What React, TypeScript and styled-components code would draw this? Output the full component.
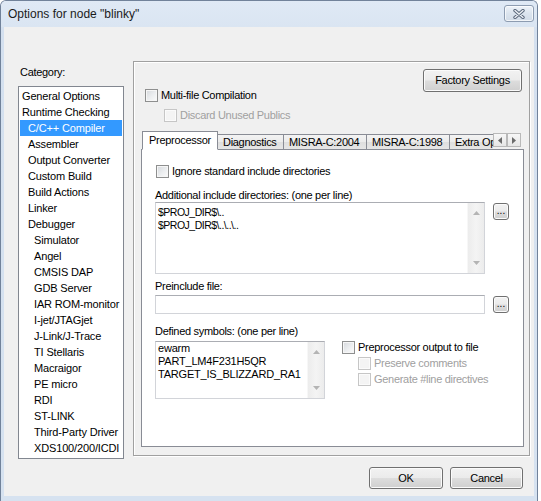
import React from 'react';
import styled, { createGlobalStyle } from 'styled-components';

const GlobalStyle = createGlobalStyle`
  html, body { margin: 0; padding: 0; background: #ffffff; }
  body {
    font-family: "Liberation Sans", Arial, sans-serif;
    font-size: 11px;
    color: #000;
  }
  * { box-sizing: border-box; }
`;

type Category = { label: string; level: number; selected?: boolean };

const categories: Category[] = [
  { label: 'General Options', level: 0 },
  { label: 'Runtime Checking', level: 0 },
  { label: 'C/C++ Compiler', level: 1, selected: true },
  { label: 'Assembler', level: 1 },
  { label: 'Output Converter', level: 1 },
  { label: 'Custom Build', level: 1 },
  { label: 'Build Actions', level: 1 },
  { label: 'Linker', level: 1 },
  { label: 'Debugger', level: 1 },
  { label: 'Simulator', level: 2 },
  { label: 'Angel', level: 2 },
  { label: 'CMSIS DAP', level: 2 },
  { label: 'GDB Server', level: 2 },
  { label: 'IAR ROM-monitor', level: 2 },
  { label: 'I-jet/JTAGjet', level: 2 },
  { label: 'J-Link/J-Trace', level: 2 },
  { label: 'TI Stellaris', level: 2 },
  { label: 'Macraigor', level: 2 },
  { label: 'PE micro', level: 2 },
  { label: 'RDI', level: 2 },
  { label: 'ST-LINK', level: 2 },
  { label: 'Third-Party Driver', level: 2 },
  { label: 'XDS100/200/ICDI', level: 2 },
];

const tabs = [
  { label: 'Preprocessor', width: 76 },
  { label: 'Diagnostics', width: 67 },
  { label: 'MISRA-C:2004', width: 84 },
  { label: 'MISRA-C:1998', width: 84 },
  { label: 'Extra Options', width: 90 },
];

export default function App() {
  return (
    <>
      <GlobalStyle />
      <Window>
        <TitleBar>
          <Title>Options for node "blinky"</Title>
          <CloseButton>
            <svg width="12" height="10" viewBox="0 0 12 10">
              <path d="M2 1.5 L10 8.5 M10 1.5 L2 8.5" stroke="#5a687c" strokeWidth="3.4" strokeLinecap="round" />
              <path d="M2 1.5 L10 8.5 M10 1.5 L2 8.5" stroke="#eef2f7" strokeWidth="1.4" strokeLinecap="round" />
            </svg>
          </CloseButton>
        </TitleBar>
        <Client>
          <Body>
            <CategoryColumn>
              <Label>Category:</Label>
              <ListBox>
                {categories.map((c) => (
                  <ListItem key={c.label} $level={c.level} $selected={c.selected}>
                    {c.label}
                  </ListItem>
                ))}
              </ListBox>
            </CategoryColumn>

            <GroupBox>
              <TopSection>
                <OptionsColumn>
                  <CheckRow>
                    <CheckBox />
                    <span>Multi-file Compilation</span>
                  </CheckRow>
                  <CheckRow $indent={19} $disabled>
                    <CheckBox $disabled />
                    <span>Discard Unused Publics</span>
                  </CheckRow>
                </OptionsColumn>
                <Button $w={99} $h={23} $top={7} $right={2}>Factory Settings</Button>
              </TopSection>

              <TabStrip>
                <TabList>
                  {tabs.map((t, i) => (
                    <Tab key={t.label} $active={i === 0} $w={t.width}>
                      {t.label}
                    </Tab>
                  ))}
                </TabList>
                <TabScroller>
                  <ScrollButton>
                    <svg width="4" height="7" viewBox="0 0 4 7"><path d="M4 0 L0 3.5 L4 7 Z" fill="#6b6b6b" /></svg>
                  </ScrollButton>
                  <ScrollButton>
                    <svg width="4" height="7" viewBox="0 0 4 7"><path d="M0 0 L4 3.5 L0 7 Z" fill="#6b6b6b" /></svg>
                  </ScrollButton>
                </TabScroller>
              </TabStrip>

              <TabPanel>
                <CheckRow $indent={1}>
                  <CheckBox />
                  <span>Ignore standard include directories</span>
                </CheckRow>

                <FieldLabel $top={11}>Additional include directories: (one per line)</FieldLabel>
                <FieldRow>
                  <TextBox $w={330} $h={72} $small>
                    <TextLines $small>
                      <div>$PROJ_DIR$\..</div>
                      <div>$PROJ_DIR$\..\..\..</div>
                    </TextLines>
                    <ScrollBar />
                  </TextBox>
                  <DotsButton>...</DotsButton>
                </FieldRow>

                <FieldLabel $top={6}>Preinclude file:</FieldLabel>
                <FieldRow $top={2}>
                  <TextBox $w={330} $h={19} />
                  <DotsButton>...</DotsButton>
                </FieldRow>

                <FieldLabel $top={11}>Defined symbols: (one per line)</FieldLabel>
                <FieldRow $top={3}>
                  <TextBox $w={170} $h={58}>
                    <TextLines>
                      <div>ewarm</div>
                      <div>PART_LM4F231H5QR</div>
                      <div>TARGET_IS_BLIZZARD_RA1</div>
                    </TextLines>
                    <ScrollBar />
                  </TextBox>
                  <OutputOptions>
                    <CheckRow>
                      <CheckBox />
                      <span>Preprocessor output to file</span>
                    </CheckRow>
                    <CheckRow $indent={16} $disabled>
                      <CheckBox $disabled />
                      <span>Preserve comments</span>
                    </CheckRow>
                    <CheckRow $indent={16} $disabled>
                      <CheckBox $disabled />
                      <span>Generate #line directives</span>
                    </CheckRow>
                  </OutputOptions>
                </FieldRow>
              </TabPanel>
            </GroupBox>
          </Body>

          <Footer>
            <Button $w={74} $h={22}>OK</Button>
            <Button $w={73} $h={22}>Cancel</Button>
          </Footer>
        </Client>
      </Window>
    </>
  );
}

function ScrollBar() {
  return (
    <ScrollTrack>
      <svg width="7" height="4" viewBox="0 0 7 4"><path d="M0 4 L3.5 0 L7 4 Z" fill="#b4b4b4" /></svg>
      <svg width="7" height="4" viewBox="0 0 7 4"><path d="M0 0 L3.5 4 L7 0 Z" fill="#b4b4b4" /></svg>
    </ScrollTrack>
  );
}

const Window = styled.div`
  width: 538px;
  height: 501px;
  display: flex;
  flex-direction: column;
  background: linear-gradient(#dde8f5, #d4e0ef 30px, #d6e2f0);
  border: 1px solid #71829a;
  border-bottom: none;
  border-radius: 6px 6px 0 0;
`;

const TitleBar = styled.div`
  height: 26px;
  display: flex;
  justify-content: space-between;
  align-items: flex-start;
  padding: 0 3px 0 7px;
  background: linear-gradient(#dfe9f5, #dae5f2);
  border-radius: 5px 5px 0 0;
`;

const Title = styled.div`
  font-size: 12px;
  line-height: 15px;
  margin-top: 6px;
  color: #1b1b1b;
`;

const CloseButton = styled.div`
  width: 30px;
  height: 17px;
  margin-top: 4px;
  border: 1px solid #8d9cb1;
  border-radius: 3px;
  background: linear-gradient(#eef3f9, #dbe4ee 50%, #d2dce8);
  box-shadow: inset 0 0 0 1px rgba(255, 255, 255, 0.7);
  display: flex;
  align-items: center;
  justify-content: center;
`;

const Client = styled.div`
  flex: 1;
  margin: 0 3px 5px;
  background: #f0f0f0;
  padding: 34px 4px 7px 14px;
  display: flex;
  flex-direction: column;
  letter-spacing: -0.3px;
`;

const Body = styled.div`
  height: 395px;
  display: flex;
  align-items: flex-start;
  gap: 9px;
`;

const CategoryColumn = styled.div`
  width: 106px;
  padding-top: 5px;
  display: flex;
  flex-direction: column;
`;

const Label = styled.div`
  line-height: 13px;
  margin-bottom: 7px;
  padding-left: 2px;
`;

const ListBox = styled.div`
  height: 373px;
  background: #fff;
  border: 1px solid #828790;
  padding-top: 1px;
  letter-spacing: -0.15px;
`;

const ListItem = styled.div<{ $level: number; $selected?: boolean }>`
  height: 16px;
  line-height: 16px;
  margin: 0 1px;
  padding-left: ${(p) => p.$level * 6 + 2}px;
  white-space: nowrap;
  background: ${(p) => (p.$selected ? '#3399ff' : 'transparent')};
  color: ${(p) => (p.$selected ? '#fff' : '#000')};
`;

const GroupBox = styled.div`
  width: 397px;
  height: 395px;
  border: 1px solid #a0a0a0;
  box-shadow: inset 1px 1px 0 #fff, 1px 1px 0 #fff;
  padding: 0 5px 8px 7px;
  display: flex;
  flex-direction: column;
`;

const TopSection = styled.div`
  height: 69px;
  display: flex;
  justify-content: space-between;
  align-items: flex-start;
`;

const OptionsColumn = styled.div`
  padding: 27px 0 0 4px;
  display: flex;
  flex-direction: column;
  gap: 7px;
`;

const CheckRow = styled.div<{ $indent?: number; $disabled?: boolean }>`
  height: 13px;
  display: flex;
  align-items: center;
  gap: 3px;
  margin-left: ${(p) => p.$indent ?? 0}px;
  color: ${(p) => (p.$disabled ? '#a0a0a0' : '#000')};
  white-space: nowrap;
  line-height: 13px;
`;

const CheckBox = styled.span<{ $disabled?: boolean }>`
  width: 13px;
  height: 13px;
  flex-shrink: 0;
  border: 1px solid ${(p) => (p.$disabled ? '#c6c6c6' : '#8e8f8f')};
  background: ${(p) =>
    p.$disabled ? '#f4f4f4' : 'linear-gradient(135deg, #d5d8dc 0%, #eceef0 55%, #fbfbfb 100%)'};
  box-shadow: inset 0 0 0 1px ${(p) => (p.$disabled ? '#fbfbfb' : '#f6f6f6')};
`;

const Button = styled.div<{ $w: number; $h: number; $top?: number; $right?: number }>`
  width: ${(p) => p.$w}px;
  height: ${(p) => p.$h}px;
  margin-top: ${(p) => p.$top ?? 0}px;
  margin-right: ${(p) => p.$right ?? 0}px;
  flex-shrink: 0;
  border: 1px solid #707070;
  border-radius: 3px;
  background: linear-gradient(#f2f2f2 0%, #ebebeb 48%, #dddddd 52%, #cfcfcf 100%);
  box-shadow: inset 0 0 0 1px #fbfbfb;
  display: flex;
  align-items: center;
  justify-content: center;
  line-height: 13px;
  color: #000;
`;

const TabStrip = styled.div`
  height: 19px;
  margin-bottom: -1px;
  display: flex;
  position: relative;
  z-index: 1;
`;

const TabList = styled.div`
  width: 352px;
  padding-left: 1px;
  display: flex;
  align-items: flex-end;
  overflow: hidden;
`;

const Tab = styled.div<{ $active?: boolean; $w: number }>`
  width: ${(p) => p.$w}px;
  height: ${(p) => (p.$active ? 19 : 16)}px;
  flex-shrink: 0;
  border: 1px solid #898c95;
  border-bottom-color: ${(p) => (p.$active ? '#fff' : '#898c95')};
  background: ${(p) => (p.$active ? '#fff' : 'linear-gradient(#f3f3f3, #ebebeb 50%, #dedede 51%, #e6e6e6)')};
  display: flex;
  align-items: center;
  justify-content: ${(p) => (p.$active ? 'center' : 'flex-start')};
  padding: ${(p) => (p.$active ? '0 0 1px' : '0 0 0 5px')};
  white-space: nowrap;
  line-height: 13px;
  position: relative;
  z-index: ${(p) => (p.$active ? 2 : 1)};

  & + & {
    margin-left: -1px;
  }
`;

const TabScroller = styled.div`
  display: flex;
  margin-top: 2px;
  height: 14px;
`;

const ScrollButton = styled.div`
  width: 14px;
  height: 14px;
  border: 1px solid #b9b9b9;
  background: linear-gradient(#f7f7f7, #e6e6e6);
  display: flex;
  align-items: center;
  justify-content: center;
`;

const TabPanel = styled.div`
  flex: 1;
  background: #fff;
  border: 1px solid #898c95;
  padding: 15px 0 0 13px;
  display: flex;
  flex-direction: column;
`;

const FieldLabel = styled.div<{ $top: number }>`
  margin-top: ${(p) => p.$top}px;
  line-height: 13px;
  white-space: nowrap;
`;

const FieldRow = styled.div<{ $top?: number }>`
  margin-top: ${(p) => p.$top ?? 0}px;
  display: flex;
  align-items: flex-start;
`;

const TextBox = styled.div<{ $w: number; $h: number; $small?: boolean }>`
  width: ${(p) => p.$w}px;
  height: ${(p) => p.$h}px;
  flex-shrink: 0;
  border: 1px solid #d2d4d9;
  border-top-color: #abadb3;
  background: #fff;
  display: flex;
  padding-left: 2px;
`;

const TextLines = styled.div<{ $small?: boolean }>`
  flex: 1;
  padding-top: ${(p) => (p.$small ? 3 : 0)}px;
  font-size: ${(p) => (p.$small ? 10.5 : 11)}px;
  letter-spacing: ${(p) => (p.$small ? -0.5 : -0.2)}px;
  line-height: 13px;
  white-space: nowrap;
`;

const ScrollTrack = styled.div`
  width: 17px;
  height: 100%;
  background: linear-gradient(90deg, #ececec, #f4f4f4 50%, #ececec);
  border-left: 1px solid #f7f7f7;
  display: flex;
  flex-direction: column;
  align-items: center;
  justify-content: space-between;
  padding: 8px 0 8px;
`;

const DotsButton = styled.div`
  width: 16px;
  height: 17px;
  margin: 1px 0 0 8px;
  border: 1px solid #707070;
  border-radius: 3px;
  background: linear-gradient(#f2f2f2 0%, #ebebeb 48%, #dddddd 52%, #cfcfcf 100%);
  box-shadow: inset 0 0 0 1px #fbfbfb;
  font-size: 10px;
  line-height: 10px;
  letter-spacing: 0;
  display: flex;
  align-items: flex-end;
  justify-content: center;
  padding-bottom: 3px;
`;

const OutputOptions = styled.div`
  margin-left: 17px;
  display: flex;
  flex-direction: column;
  gap: 3px;
`;

const Footer = styled.div`
  margin-top: 11px;
  padding-right: 7px;
  display: flex;
  justify-content: flex-end;
  gap: 7px;
`;
